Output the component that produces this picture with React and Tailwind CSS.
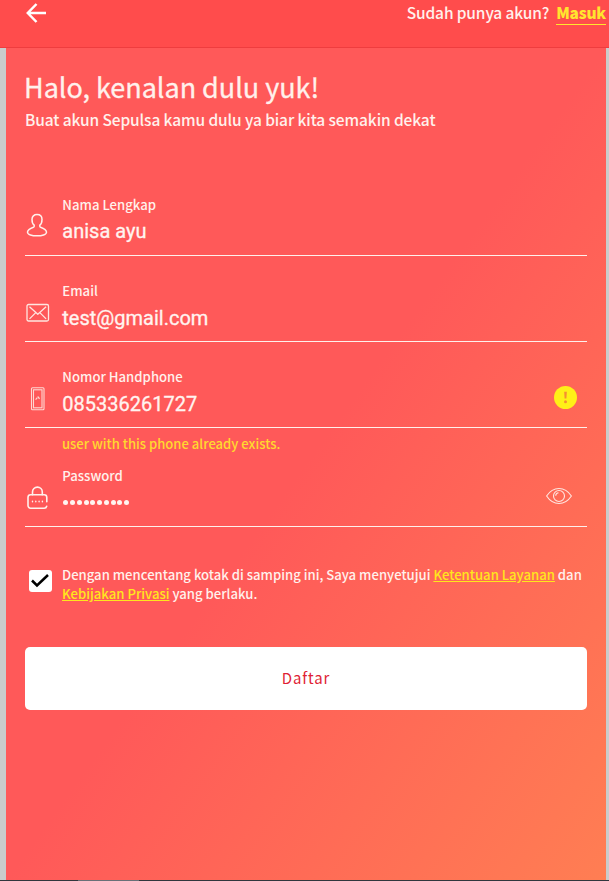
import React from 'react';

const sans = "font-['Noto_Sans_CJK_SC','Open_Sans',sans-serif]";

function UserIcon() {
  return (
    <svg width="24" height="26" viewBox="0 0 24 26" fill="none" stroke="#fff1ec" strokeWidth="1.500" strokeLinejoin="round">
      <path d="M9.200 13.200C7.500 12 7 10 7 7.500c0-3.200 2-4.900 5-4.900s5 1.700 5 4.900c0 2.500-.5 4.500-2.200 5.700v1c0 .5.300.8.800 1 3.800 1.300 5.700 2.300 5.900 4.900.1 2.600-4.700 3.700-9.500 3.700s-9.600-1.100-9.500-3.700c.2-2.600 2.100-3.600 5.900-4.900.5-.2.800-.5.800-1z" />
    </svg>
  );
}

function MailIcon() {
  return (
    <svg width="24" height="20" viewBox="0 0 24 20" fill="none" stroke="#ffe6e0" strokeWidth="1.300" strokeLinejoin="round">
      <rect x="1" y="1.500" width="21.500" height="16.500" rx="1.500" />
      <path d="M3.500 3.800l8.300 7.500 8.300-7.500M3.500 15.900l6-6M20.100 15.900l-6-6" />
    </svg>
  );
}

function PhoneIcon() {
  return (
    <svg width="16" height="24" viewBox="0 0 16 24" fill="none" stroke="#ffd8d2" strokeWidth="1.100">
      <rect x="1.500" y="0.800" width="12.500" height="22" rx="1" />
      <rect x="3.500" y="2.800" width="8.500" height="18" />
      <path d="M5.600 12.600l2.400-2.600 2 2.200" strokeWidth="1.200" strokeDasharray="2.600 .7" />
    </svg>
  );
}

function LockIcon() {
  return (
    <svg width="22" height="24" viewBox="0 0 22 24" fill="none" stroke="#fff1ec" strokeWidth="1.600" strokeLinecap="round">
      <path d="M5.500 8.800V6a4.900 4.900 0 0 1 9.800 0v2.800" />
      <path d="M19.800 15.700v-4.300a2.600 2.600 0 0 0-2.600-2.600H3.600A2.600 2.600 0 0 0 1 11.400v8.200a2.600 2.600 0 0 0 2.600 2.600h13.600a2.600 2.600 0 0 0 2.500-2" />
      <path d="M5.500 15.300v.5M8.800 15.300v.5M12.100 15.300v.5M15.400 15.300v.5" strokeWidth="1.400" />
    </svg>
  );
}

function EyeIcon() {
  return (
    <svg width="28" height="18" viewBox="0 0 28 18" fill="none" stroke="#ffe6e0" strokeWidth="1.100">
      <path d="M1.600 9C4.800 4.200 9 1.500 14 1.500S23.200 4.200 26.400 9C23.200 13.800 19 16.500 14 16.500S4.800 13.800 1.600 9z" />
      <circle cx="14" cy="9" r="5.500" />
      <path d="M10.700 8.700A3.200 3.200 0 0 1 13.500 5.800" />
    </svg>
  );
}

function Field({ icon, label, trailing, pad = 'pt-[25px]', drop = 'pt-px', children }) {
  return (
    <div className={`flex border-b border-[#fff0ec] pb-[10px] ${pad}`}>
      <div className="flex w-[37.300px] shrink-0 items-start pt-[9px]">{icon}</div>
      <div className="grow">
        <div className="h-5 text-[13.150px] font-medium leading-5 text-[#fff1ec]">{label}</div>
        <div className={`mt-0.5 h-7 font-[Roboto,sans-serif] text-[20px] leading-7 text-[#fff4f0] [-webkit-text-stroke:0.3px_#fff4f0] ${drop}`}>{children}</div>
      </div>
      {trailing}
    </div>
  );
}

export default function App() {
  return (
    <div className={`flex h-[881px] w-[609px] flex-col overflow-hidden bg-[#cacccb] ${sans}`}>
      <header className="flex h-12 shrink-0 items-start justify-between border-b border-[#ee3d3f] bg-[#ff4c4c] pl-[26px] pr-[3px]">
        <svg className="mt-[3px]" width="21" height="20" viewBox="0 0 21 20" fill="none" stroke="#fff" strokeWidth="2.500">
          <path d="M20 10H2M10.500 1L1.800 10l8.700 9" />
        </svg>
        <div className="flex text-[15.500px] leading-6 text-[#fff1ec]">
          <span className="mr-[7px] font-medium tracking-[-0.130px]">Sudah punya akun?</span>
          <a className="h-[25px] border-b border-[#ffe62e] font-black tracking-[-0.200px] text-[#ffe62e]">Masuk</a>
        </div>
      </header>

      <main className="ml-[6px] mr-[3px] h-[832px] shrink-0 bg-[linear-gradient(to_bottom_right,#ff5959_0%,#ff5959_50%,#ff7e53_100%)] px-[19px]">
        <h1 className="-ml-px pt-[19px] text-[27px] leading-[40px] tracking-[-0.030px] text-[#fff1ec] [-webkit-text-stroke:0.3px_#fff1ec]">Halo, kenalan dulu yuk!</h1>
        <p className="text-[15.500px] font-medium leading-6 tracking-[-0.110px] text-[#fff1ec]">Buat akun Sepulsa kamu dulu ya biar kita semakin dekat</p>

        <form className="mt-[39px] w-[562px]">
          <Field drop="pt-0" icon={<div className="mt-[8px]"><UserIcon /></div>} label="Nama Lengkap">anisa ayu</Field>
          <Field icon={<div className="ml-px mt-[13px]"><MailIcon /></div>} label="Email">test@gmail.com</Field>
          <Field
            icon={<div className="ml-[5px] mt-[11px]"><PhoneIcon /></div>}
            label="Nomor Handphone"
            trailing={
              <svg className="mr-[10px] mt-[18px]" width="24" height="24" viewBox="0 0 24 24">
                <circle cx="12.500" cy="12.500" r="11.500" fill="#fff017" />
                <path d="M11.200 6.800h2.600l-.4 6.700h-1.800z" fill="#f58f32" />
                <circle cx="12.500" cy="16.700" r="1.500" fill="#f58f32" />
              </svg>
            }
          >
            085336261727
          </Field>
          <p className="ml-[37px] pt-[6px] text-[13.050px] font-medium leading-5 text-[#ffd92e]">user with this phone already exists.</p>
          <Field
            pad="pt-3"
            drop="pt-0"
            icon={<div className="ml-[2px] mt-[11px]"><LockIcon /></div>}
            label="Password"
            trailing={<div className="mr-[14px] mt-[21px]"><EyeIcon /></div>}
          >
            <div className="flex h-full items-center gap-[1.750px] pl-px pt-px">
              {Array.from({ length: 10 }, (_, i) => (
                <span key={i} className="size-[5px] rounded-full bg-[#fff4f0]" />
              ))}
            </div>
          </Field>

          <div className="mt-[38px] flex">
            <div className="ml-1 mr-[10px] mt-[5px] flex h-[22px] w-[23px] shrink-0 items-center justify-center rounded-[3px] bg-white">
              <svg className="-ml-px" width="18" height="14" viewBox="0 0 18 14" fill="none" stroke="#000" strokeWidth="2.500">
                <path d="M1 6.500l5 5L17 1" />
              </svg>
            </div>
            <p className="whitespace-nowrap text-[13.120px] font-medium leading-[19px] text-[#fff1ec]">
              Dengan mencentang kotak di samping ini, Saya menyetujui <a className="text-[#ffe61c] underline">Ketentuan Layanan</a> dan
              <br />
              <a className="text-[#ffe61c] underline">Kebijakan Privasi</a> yang berlaku.
            </p>
          </div>

          <button type="button" className="mt-[44px] flex h-[63px] w-full items-center justify-center rounded-[5px] bg-white pb-px text-[15px] tracking-[0.900px] text-[#df1f35]">
            Daftar
          </button>
        </form>
      </main>
      <footer className="flex h-px shrink-0 bg-[#30363d]">
        <div className="ml-[78px] h-px w-[61px] bg-[#687078]" />
      </footer>
    </div>
  );
}
